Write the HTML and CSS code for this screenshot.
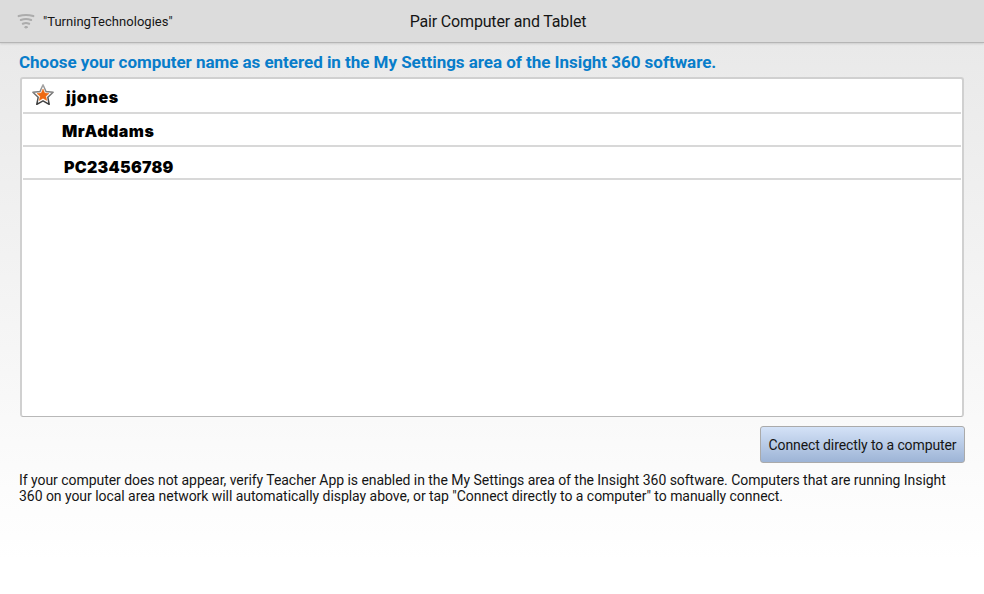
FILE: index.html
```html
<!DOCTYPE html>
<html lang="en">
<head>
<meta charset="utf-8">
<title>Pair Computer and Tablet</title>
<link rel="stylesheet" href="styles.css">
</head>
<body>
<header class="bar">
  <div class="network">
    <svg class="wifi" width="18" height="18" viewBox="0 0 18 18" fill="none" stroke="#acacac" stroke-width="2.1" stroke-linecap="round">
      <path d="M1.7 3.1Q9 .8 16.3 3.1M3.9 7Q9 5 14.1 7M5.9 10.7Q9 9.3 12.1 10.7"/>
      <ellipse cx="9" cy="14.2" rx="1.4" ry=".8" fill="#acacac" stroke-width="1"/>
    </svg>
    <span class="ssid">"TurningTechnologies"</span>
  </div>
  <h1 class="title"><span>Pair Computer and Tablet</span></h1>
</header>
<main class="content">
  <h2 class="prompt"><span>Choose your computer name as entered in the My Settings area of the Insight 360 software.</span></h2>
  <ul class="list">
    <li class="row favorite">
      <svg class="star" width="24" height="24" viewBox="0 0 24 24">
        <defs><linearGradient id="edge" x1="0" y1="0" x2="0" y2="1"><stop offset="0" stop-color="#aaa"/><stop offset="1" stop-color="#333"/></linearGradient></defs>
        <path d="M12 1.8L15 8.5L22.1 9.3L16.8 14.2L18.2 21.3L12 17.8L5.8 21.3L7.2 14.2L1.9 9.3L9 8.5Z" fill="#fff" stroke="url(#edge)" stroke-width="1.5" stroke-linejoin="round"/>
        <path d="M12 6L13.7 10L18 10.4L14.8 13.2L15.7 17.4L12 15.2L8.3 17.4L9.2 13.2L6 10.4L10.3 10Z" fill="#ef6a12" stroke="#ef6a12" stroke-width=".5"/>
      </svg>
      <span class="name jones">jjones</span>
    </li>
    <li class="row"><span class="name addams">MrAddams</span></li>
    <li class="row"><span class="name pc">PC23456789</span></li>
  </ul>
  <button class="connect"><span>Connect directly to a computer</span></button>
  <p class="help"><span>If your computer does not appear, verify Teacher App is enabled in the My Settings area of the Insight 360 software. Computers that are running Insight</span><br><span>360 on your local area network will automatically display above, or tap "Connect directly to a computer" to manually connect.</span></p>
</main>
</body>
</html>
```
FILE: styles.css
```css
* { box-sizing: border-box; }
html { height: 100%; }
body {
  margin: 0;
  height: 594px;
  overflow: hidden;
  font-family: Roboto, "Liberation Sans", sans-serif;
  color: #151515;
  background: linear-gradient(#e9e9e9 43px, #fff 560px);
}
h1, h2, p, ul { margin: 0; padding: 0; }
span { white-space: nowrap; }
.bar {
  display: grid;
  grid-template-columns: 392px 212px 380px;
  align-items: center;
  height: 43px;
  background: #dcdcdc;
  border-bottom: 1px solid #b5b5b5;
  box-shadow: 0 1px 2px #ccc;
}
.network { display: flex; align-items: center; padding-left: 17px; }
.wifi { margin-top: 1px; }
.ssid { margin-left: 8px; font-size: 13px; letter-spacing: 0.03px; }
.title { font-size: 16px; font-weight: 400; text-align: center; letter-spacing: -0.17px; }
.content { display: flex; flex-direction: column; padding: 0 19px 0 20px; }
.prompt {
  margin: 9px 0 5px -1px;
  height: 20px;
  line-height: 20px;
  font-size: 17px;
  font-weight: 700;
  letter-spacing: -0.033px;
  color: #087dca;
}
.list {
  list-style: none;
  width: 944px;
  height: 340px;
  padding: 1px 1px 0;
  background: #fff;
  border: 2px solid #d0d0d0;
  border-bottom: 1px solid #b8b8b8;
  border-radius: 3px;
}
.row {
  display: flex;
  align-items: center;
  height: 33px;
  border-bottom: 2px solid #d8d8d8;
}
.favorite { height: 34px; }
.star { margin: 0 0 2px 8px; }
.name { font-family: Inter, sans-serif; font-weight: 900; font-size: 16px; color: #000; }
.jones { margin-left: 11px; padding-top: 1px; letter-spacing: 0.65px; }
.addams { margin-left: 39px; padding-top: 3px; letter-spacing: 0.5px; }
.pc { margin-left: 41px; padding-top: 9px; letter-spacing: 0.25px; }
.connect {
  align-self: flex-end;
  width: 205px;
  height: 37px;
  margin-top: 9px;
  padding: 0;
  font: 14px Roboto, sans-serif;
  letter-spacing: -0.1px;
  color: #151515;
  background: linear-gradient(#d4e2f7, #9db4d6);
  border: 1px solid #aaa;
  border-radius: 3px;
}
.help { margin: 9px 0 0 -1px; font-size: 14px; line-height: 16px; letter-spacing: -0.047px; }
```
